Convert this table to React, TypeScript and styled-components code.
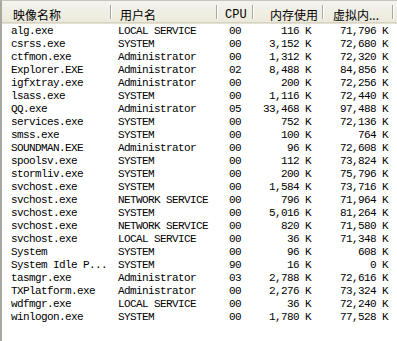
import React from "react"
import styled, { createGlobalStyle } from "styled-components"

interface Proc {
    name: string,
    user: string,
    cpu: string,
    mem: string,
    vm: string,
}

const procs: Proc[] = [
    { name: 'alg.exe', user: 'LOCAL SERVICE', cpu: '00', mem: '116 K', vm: '71,796 K' },
    { name: 'csrss.exe', user: 'SYSTEM', cpu: '00', mem: '3,152 K', vm: '72,680 K' },
    { name: 'ctfmon.exe', user: 'Administrator', cpu: '00', mem: '1,312 K', vm: '72,320 K' },
    { name: 'Explorer.EXE', user: 'Administrator', cpu: '02', mem: '8,488 K', vm: '84,856 K' },
    { name: 'igfxtray.exe', user: 'Administrator', cpu: '00', mem: '200 K', vm: '72,256 K' },
    { name: 'lsass.exe', user: 'SYSTEM', cpu: '00', mem: '1,116 K', vm: '72,440 K' },
    { name: 'QQ.exe', user: 'Administrator', cpu: '05', mem: '33,468 K', vm: '97,488 K' },
    { name: 'services.exe', user: 'SYSTEM', cpu: '00', mem: '752 K', vm: '72,136 K' },
    { name: 'smss.exe', user: 'SYSTEM', cpu: '00', mem: '100 K', vm: '764 K' },
    { name: 'SOUNDMAN.EXE', user: 'Administrator', cpu: '00', mem: '96 K', vm: '72,608 K' },
    { name: 'spoolsv.exe', user: 'SYSTEM', cpu: '00', mem: '112 K', vm: '73,824 K' },
    { name: 'stormliv.exe', user: 'SYSTEM', cpu: '00', mem: '200 K', vm: '75,796 K' },
    { name: 'svchost.exe', user: 'SYSTEM', cpu: '00', mem: '1,584 K', vm: '73,716 K' },
    { name: 'svchost.exe', user: 'NETWORK SERVICE', cpu: '00', mem: '796 K', vm: '71,964 K' },
    { name: 'svchost.exe', user: 'SYSTEM', cpu: '00', mem: '5,016 K', vm: '81,264 K' },
    { name: 'svchost.exe', user: 'NETWORK SERVICE', cpu: '00', mem: '820 K', vm: '71,580 K' },
    { name: 'svchost.exe', user: 'LOCAL SERVICE', cpu: '00', mem: '36 K', vm: '71,348 K' },
    { name: 'System', user: 'SYSTEM', cpu: '00', mem: '96 K', vm: '608 K' },
    { name: 'System Idle P...', user: 'SYSTEM', cpu: '90', mem: '16 K', vm: '0 K' },
    { name: 'tasmgr.exe', user: 'Administrator', cpu: '03', mem: '2,788 K', vm: '72,616 K' },
    { name: 'TXPlatform.exe', user: 'Administrator', cpu: '00', mem: '2,276 K', vm: '73,324 K' },
    { name: 'wdfmgr.exe', user: 'LOCAL SERVICE', cpu: '00', mem: '36 K', vm: '72,240 K' },
    { name: 'winlogon.exe', user: 'SYSTEM', cpu: '00', mem: '1,780 K', vm: '77,528 K' },
]

const GlobalStyle = createGlobalStyle`
    html, body {
        margin: 0;
        padding: 0;
        background: #fff;
    }
`

const COLS = '109px 106px 36px 70px 70px 1fr'

export default function App() {
    return (
        <>
            <GlobalStyle />
            <ListView>
                <Header>
                    <HeadCell $pad='0 0 0 11px'>映像名称</HeadCell>
                    <HeadCell $pad='0 0 0 9px'>用户名</HeadCell>
                    <HeadCell $pad='0 0 0 8px' $mono>CPU</HeadCell>
                    <HeadCell $pad='0 5px 0 0' $align='right'>内存使用</HeadCell>
                    <HeadCell $pad='0 0 0 10px'>虚拟内...</HeadCell>
                    <HeadCell $last />
                </Header>
                <Body>
                    {procs.map((p, i) => (
                        <Row key={i}>
                            <Cell $pad='0 0 0 9px'>{p.name}</Cell>
                            <Cell $pad='0 0 0 7px'>{p.user}</Cell>
                            <Cell $pad='0 0 0 12px'>{p.cpu}</Cell>
                            <Cell $pad='0 12px 0 0' $align='right'>{p.mem}</Cell>
                            <Cell $pad='0 5px 0 0' $align='right'>{p.vm}</Cell>
                            <Cell />
                        </Row>
                    ))}
                </Body>
            </ListView>
        </>
    )
}

const ListView = styled.div`
    width: 397px;
    height: 341px;
    box-sizing: border-box;
    border-left: 2px solid #a9a89f;
    border-top: 1px solid #c8c6bc;
    background: #fff;
    overflow: hidden;
`

const Header = styled.div`
    display: grid;
    grid-template-columns: ${COLS};
    height: 22px;
    box-sizing: border-box;
    background: linear-gradient(#f4f3ee, #ebeadb);
    border-bottom: 1px solid #d6d2c2;
    box-shadow: 0 1px 0 #e4e1d3;
`

const HeadCell = styled.div<{ $pad?: string, $align?: string, $mono?: boolean, $last?: boolean }>`
    position: relative;
    box-sizing: border-box;
    display: flex;
    align-items: flex-end;
    justify-content: ${p => p.$align === 'right' ? 'flex-end' : 'flex-start'};
    padding: ${p => p.$pad || '0'};
    padding-bottom: 0;
    font-family: ${p => p.$mono ? '"Liberation Mono", monospace' : '"Noto Sans CJK SC", sans-serif'};
    font-size: 12px;
    line-height: 14px;
    color: #000;
    white-space: nowrap;
    &::after {
        content: '';
        display: ${p => p.$last ? 'none' : 'block'};
        position: absolute;
        right: 0;
        top: 4px;
        bottom: 3px;
        width: 1px;
        background: #aca899;
        box-shadow: 1px 0 0 #fff;
    }
`

const Body = styled.div`
    padding-top: 2px;
`

const Row = styled.div`
    display: grid;
    grid-template-columns: ${COLS};
    height: 13px;
    align-items: center;
`

const Cell = styled.div<{ $pad?: string, $align?: string }>`
    padding: ${p => p.$pad || '0'};
    text-align: ${p => p.$align || 'left'};
    font-family: "Liberation Mono", monospace;
    font-size: 11px;
    letter-spacing: -0.6px;
    line-height: 13px;
    color: #000;
    white-space: nowrap;
    overflow: hidden;
`
